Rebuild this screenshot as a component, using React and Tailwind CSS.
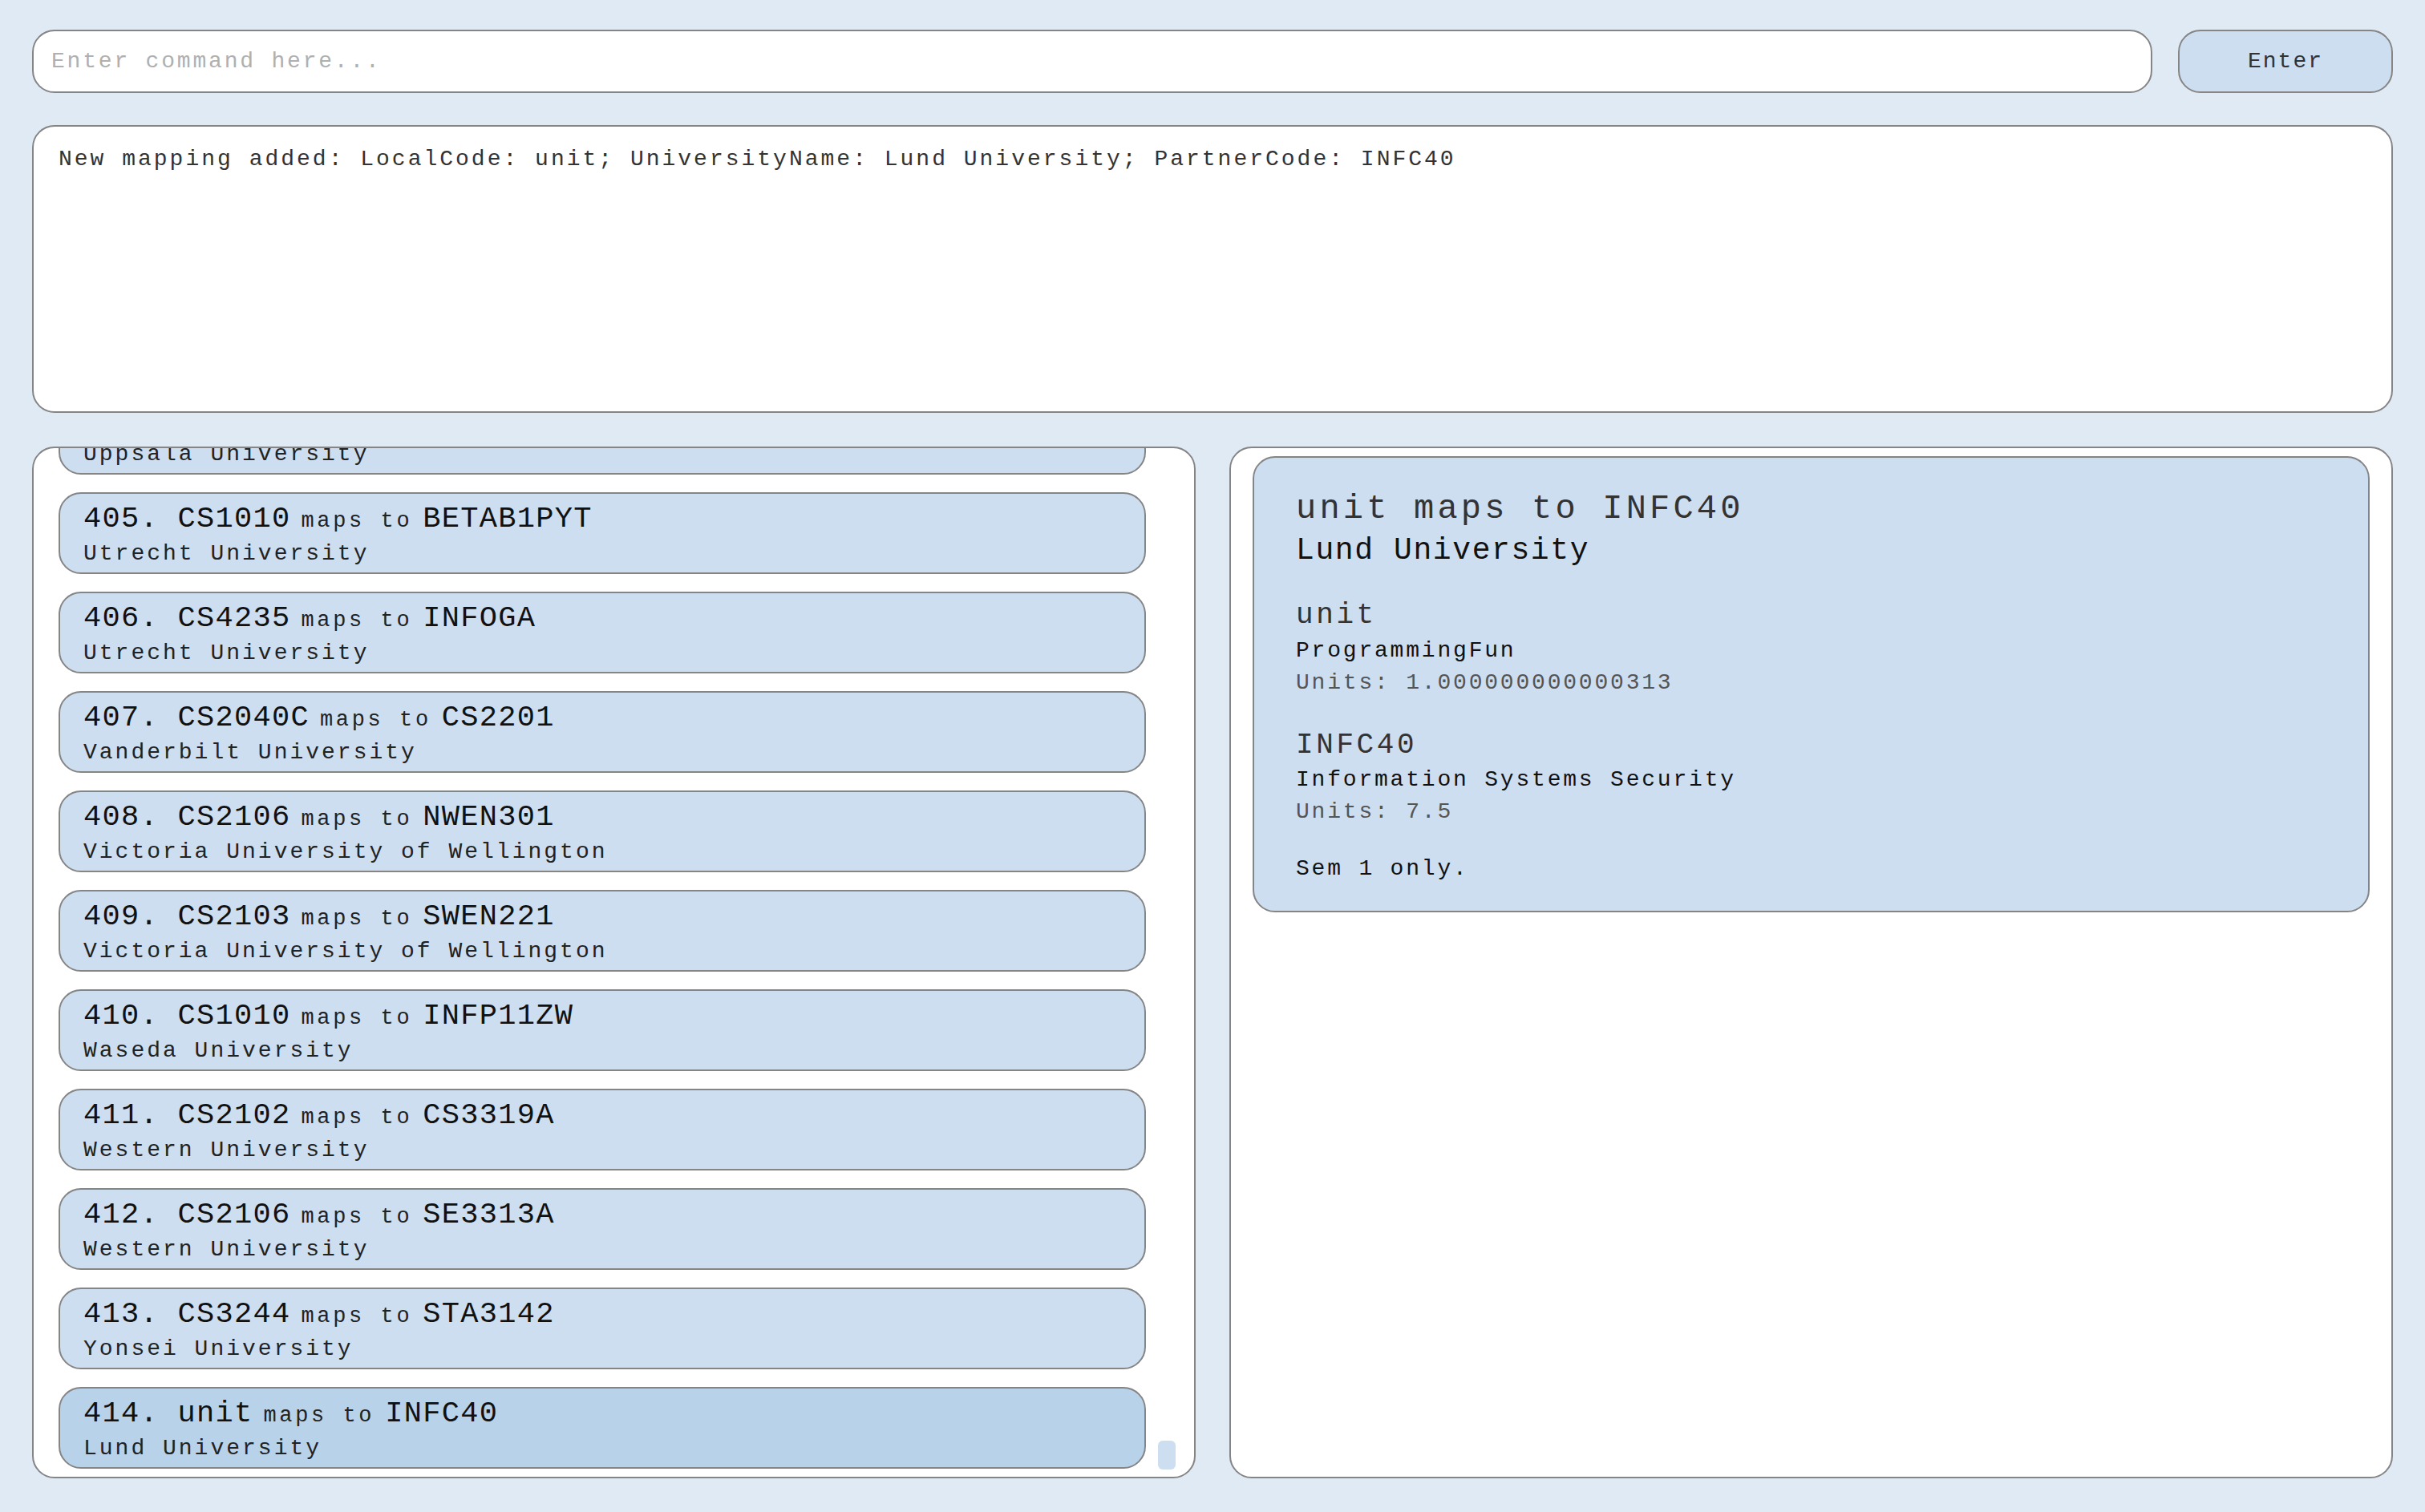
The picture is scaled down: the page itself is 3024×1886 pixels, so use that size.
import React from 'react';

const mono = { fontFamily: '"Liberation Mono", "DejaVu Sans Mono", monospace' };

const mappings = [
  { id: 401, local: 'CS2030', partner: '1DL450', uni: 'Uppsala University' },
  { id: 402, local: 'CS2103', partner: '1DL251', uni: 'Uppsala University' },
  { id: 403, local: 'CS3230', partner: '1DL231', uni: 'Uppsala University' },
  { id: 404, local: 'CS2106', partner: '1DT044', uni: 'Uppsala University' },
  { id: 405, local: 'CS1010', partner: 'BETAB1PYT', uni: 'Utrecht University' },
  { id: 406, local: 'CS4235', partner: 'INFOGA', uni: 'Utrecht University' },
  { id: 407, local: 'CS2040C', partner: 'CS2201', uni: 'Vanderbilt University' },
  { id: 408, local: 'CS2106', partner: 'NWEN301', uni: 'Victoria University of Wellington' },
  { id: 409, local: 'CS2103', partner: 'SWEN221', uni: 'Victoria University of Wellington' },
  { id: 410, local: 'CS1010', partner: 'INFP11ZW', uni: 'Waseda University' },
  { id: 411, local: 'CS2102', partner: 'CS3319A', uni: 'Western University' },
  { id: 412, local: 'CS2106', partner: 'SE3313A', uni: 'Western University' },
  { id: 413, local: 'CS3244', partner: 'STA3142', uni: 'Yonsei University' },
  { id: 414, local: 'unit', partner: 'INFC40', uni: 'Lund University', selected: true },
];

const MappingCard = ({ m }) => (
  <div
    className={`shrink-0 h-[102px] rounded-[28px] border-2 border-[#858585] pl-[29px] pt-[9px] ${
      m.selected ? 'bg-[#b8d2ea]' : 'bg-[#cddef0]'
    }`}
  >
    <div className="flex items-baseline gap-[13px] h-[44px] leading-[44px]">
      <span className="text-[37px] tracking-[1.3px] text-[#111]">{m.id}. {m.local}</span>
      <span className="text-[27px] tracking-[3.6px] text-[#222]">maps to</span>
      <span className="text-[37px] tracking-[1.3px] text-[#111]">{m.partner}</span>
    </div>
    <div className="mt-[4px] h-[36px] leading-[36px] text-[28px] tracking-[3px] text-[#222]">{m.uni}</div>
  </div>
);

export default function App() {
  return (
    <div style={mono} className="h-[1886px] w-full bg-[#e0eaf5] flex flex-col px-[40px] pt-[37px] pb-[42px]">
      {/* command bar */}
      <div className="flex gap-[32px] h-[79px] shrink-0">
        <input
          className="flex-1 h-full rounded-[28px] border-2 border-[#858585] bg-white px-[22px] text-[28px] tracking-[2.8px] text-[#222] placeholder:text-[#b0b0b0] outline-none"
          placeholder="Enter command here..."
        />
        <button className="w-[268px] h-full rounded-[28px] border-2 border-[#858585] bg-[#cddef0] text-[28px] tracking-[2px] text-[#333]">
          Enter
        </button>
      </div>

      {/* result box */}
      <div className="mt-[40px] h-[359px] shrink-0 rounded-[28px] border-2 border-[#858585] bg-white pl-[31px] pt-[21px]">
        <p className="leading-[40px] text-[28px] tracking-[3px] text-[#333]">
          New mapping added: LocalCode: unit; UniversityName: Lund University; PartnerCode: INFC40
        </p>
      </div>

      {/* panels */}
      <div className="mt-[42px] flex-1 min-h-0 grid grid-cols-2 gap-[42px]">
        <div className="relative rounded-[28px] border-2 border-[#858585] bg-white overflow-hidden pl-[31px] pr-[60px] pb-[10px] flex flex-col justify-end gap-[22px]">
          {mappings.map((m) => (
            <MappingCard key={m.id} m={m} />
          ))}
          <div className="absolute right-[23px] bottom-[9px] w-[22px] h-[36px] rounded-[6px] bg-[#cddef0]" />
        </div>

        <div className="rounded-[28px] border-2 border-[#858585] bg-white pt-[10px] px-[27px]">
          <div className="rounded-[28px] border-2 border-[#858585] bg-[#cddef0] pl-[52px] pt-[38px] pb-[32px]">
            <div className="leading-[52px] text-[42px] tracking-[4.2px] text-[#333]">unit maps to INFC40</div>
            <div className="leading-[52px] text-[38px] tracking-[1.6px] text-[#111]">Lund University</div>

            <div className="mt-[33px] leading-[44px] text-[36px] tracking-[3.6px] text-[#333]">unit</div>
            <div className="mt-[2px] leading-[40px] text-[28px] tracking-[2.8px] text-[#111]">ProgrammingFun</div>
            <div className="leading-[40px] text-[28px] tracking-[2.8px] text-[#555]">Units: 1.000000000000313</div>

            <div className="mt-[36px] leading-[44px] text-[36px] tracking-[3.6px] text-[#333]">INFC40</div>
            <div className="mt-[1px] leading-[40px] text-[28px] tracking-[2.8px] text-[#111]">Information Systems Security</div>
            <div className="leading-[40px] text-[28px] tracking-[2.8px] text-[#555]">Units: 7.5</div>

            <div className="mt-[31px] leading-[40px] text-[28px] tracking-[2.8px] text-[#111]">Sem 1 only.</div>
          </div>
        </div>
      </div>
    </div>
  );
}
